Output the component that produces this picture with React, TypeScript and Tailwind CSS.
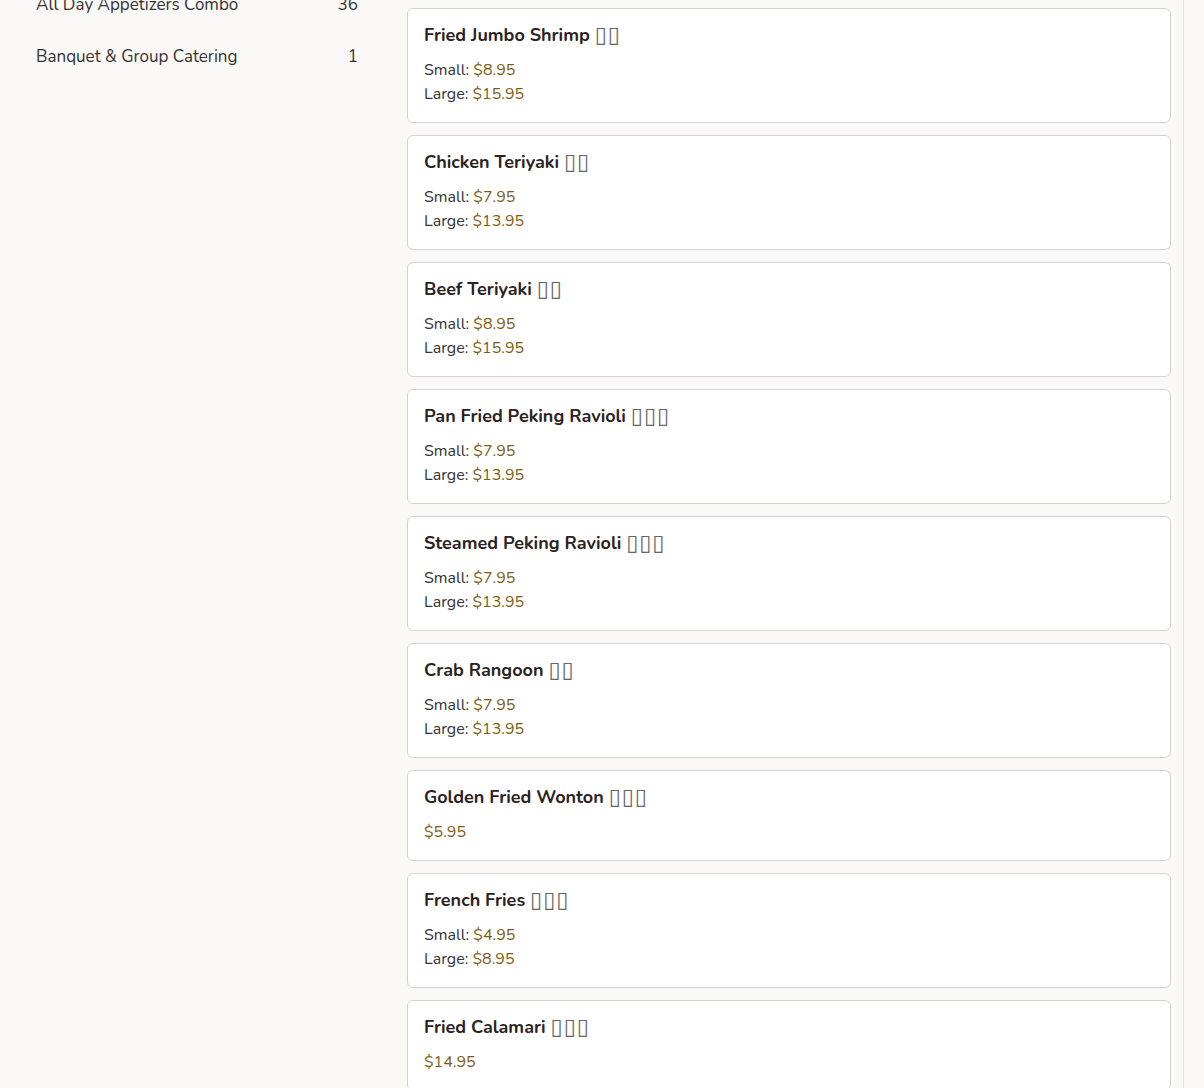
import React from 'react'

type Price = { label?: string; value: string }
type Item = { name: string; cjk: number; prices: Price[] }

const categories = [
  { name: 'All Day Appetizers Combo', count: 36 },
  { name: 'Banquet & Group Catering', count: 1 },
]

const sl = (s: string, l: string): Price[] => [
  { label: 'Small', value: s },
  { label: 'Large', value: l },
]

const items: Item[] = [
  { name: 'Fried Jumbo Shrimp', cjk: 2, prices: sl('$8.95', '$15.95') },
  { name: 'Chicken Teriyaki', cjk: 2, prices: sl('$7.95', '$13.95') },
  { name: 'Beef Teriyaki', cjk: 2, prices: sl('$8.95', '$15.95') },
  { name: 'Pan Fried Peking Ravioli', cjk: 3, prices: sl('$7.95', '$13.95') },
  { name: 'Steamed Peking Ravioli', cjk: 3, prices: sl('$7.95', '$13.95') },
  { name: 'Crab Rangoon', cjk: 2, prices: sl('$7.95', '$13.95') },
  { name: 'Golden Fried Wonton', cjk: 3, prices: [{ value: '$5.95' }] },
  { name: 'French Fries', cjk: 3, prices: sl('$4.95', '$8.95') },
  { name: 'Fried Calamari', cjk: 3, prices: [{ value: '$14.95' }] },
]

function MenuCard({ item }: { item: Item }) {
  return (
    <div className="rounded-md border border-[#d6d3cf] bg-white p-4">
      <h3 className="mb-[13px] text-[18px] font-bold leading-[20px] text-[#2b221e]">
        {item.name}{' '}
        {/* missing-glyph boxes for the Chinese name */}
        <span className="inline-block h-5 align-top font-['DejaVu_Sans',sans-serif] text-[22px] font-normal leading-5 tracking-[1px] text-[#666]">
          {'▯'.repeat(item.cjk)}
        </span>
      </h3>
      <div className="text-[16px] leading-6 text-[#333]">
        {item.prices.map((p, i) => (
          <div key={i}>
            {p.label && <span>{p.label}: </span>}
            <span className="text-[#7d5c12]">{p.value}</span>
          </div>
        ))}
      </div>
    </div>
  )
}

export default function App() {
  return (
    <div className="min-h-screen bg-[#faf9f7] font-['Nunito','Lato',sans-serif]">
      <div className="flex min-h-screen w-[1184px] border-r border-[#e4e1dc]">
        <aside className="w-[394px] shrink-0 px-6">
          <ul className="-mt-[20px] flex flex-col gap-0.5">
            {categories.map((c) => (
              <li
                key={c.name}
                className="flex items-center justify-between px-3 py-3 text-[17px] leading-[26px] text-[#35322f]"
              >
                <span>{c.name}</span>
                <span>{c.count}</span>
              </li>
            ))}
          </ul>
        </aside>
        <main className="flex flex-1 flex-col gap-3 pb-6 pl-[13px] pr-3 pt-2">
          {items.map((it) => (
            <MenuCard key={it.name} item={it} />
          ))}
        </main>
      </div>
    </div>
  )
}
